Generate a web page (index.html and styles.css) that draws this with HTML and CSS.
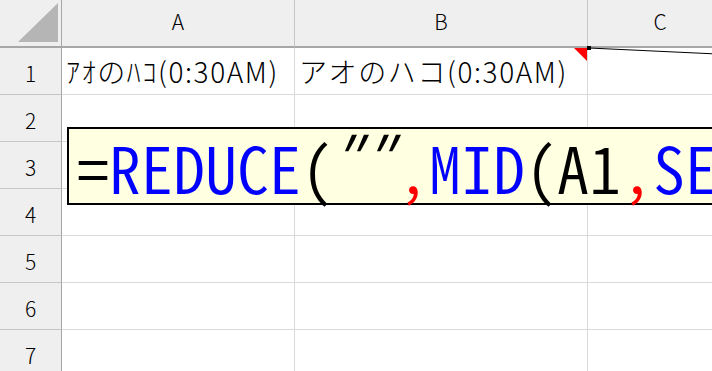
FILE: index.html
```html
<!DOCTYPE html>
<html lang="ja">
<head>
  <meta charset="UTF-8" />
  <meta name="viewport" content="width=device-width, initial-scale=1" />
  <title>Sheet</title>
  <link rel="stylesheet" href="styles.css">
</head>
<body>
  <div class="sheet">
    <div class="grid">
      <div class="corner">
        <svg class="corner-tri" width="40" height="39" viewBox="0 0 40 39"><polygon points="40,0 40,39 0,39" fill="#b5b5b5"/></svg>
      </div>
      <div class="col-head">A</div>
      <div class="col-head">B</div>
      <div class="col-head last">C</div>

      <div class="row-head">1</div>
      <div class="cell">ｱｵのﾊｺ(0:30AM)</div>
      <div class="cell">アオのハコ(0:30AM)</div>
      <div class="cell"></div>

      <div class="row-head">2</div>
      <div class="cell"></div><div class="cell"></div><div class="cell"></div>
      <div class="row-head">3</div>
      <div class="cell"></div><div class="cell"></div><div class="cell"></div>
      <div class="row-head">4</div>
      <div class="cell"></div><div class="cell"></div><div class="cell"></div>
      <div class="row-head">5</div>
      <div class="cell"></div><div class="cell"></div><div class="cell"></div>
      <div class="row-head">6</div>
      <div class="cell"></div><div class="cell"></div><div class="cell"></div>
      <div class="row-head">7</div>
      <div class="cell"></div><div class="cell"></div><div class="cell"></div>
    </div>

    <!-- comment marker on B1 and its callout line -->
    <svg class="comment-mark" width="14" height="14" viewBox="0 0 14 14"><polygon points="0,0 13,0 13,13" fill="#ff0000"/></svg>
    <svg class="comment-line" width="130" height="12" viewBox="0 0 130 12">
      <line x1="2" y1="2" x2="130" y2="8" stroke="#000" stroke-width="1.2"/>
      <rect x="0" y="0" width="4" height="4" fill="#000"/>
    </svg>

    <div class="formula">
      <span class="k">=</span><span class="fn">REDUCE</span><span class="k">(</span><span class="q">″</span><span class="q">″</span><span class="sep">,</span><span class="fn">MID</span><span class="k">(A1</span><span class="sep">,</span><span class="fn">SE</span>
    </div>
  </div>
</body>
</html>
```

FILE: styles.css
```css
body {
  margin: 0;
  background: #ffffff;
  overflow: hidden;
  font-family: "Noto Sans CJK JP", "Noto Sans", sans-serif;
  color: #000;
}
.sheet {
  position: relative;
  width: 712px;
  height: 371px;
  overflow: hidden;
}
.grid {
  display: grid;
  grid-template-columns: 62px 233px 293px 145px;
  grid-template-rows: 48px repeat(7, 47px);
}
.corner {
  background: #efefef;
  border-right: 1px solid #a6a6a6;
  border-bottom: 2px solid #a6a6a6;
  display: flex;
  align-items: flex-end;
  justify-content: flex-end;
  padding: 0 3px 4px 0;
  box-sizing: border-box;
}
.col-head {
  background: #efefef;
  border-right: 1px solid #c6c6c6;
  border-bottom: 2px solid #a6a6a6;
  display: flex;
  align-items: center;
  justify-content: center;
  font-size: 21px;
  font-weight: 300;
  padding-bottom: 5px;
  box-sizing: border-box;
}
.row-head {
  background: #efefef;
  border-right: 1px solid #a6a6a6;
  border-bottom: 1px solid #c6c6c6;
  display: flex;
  align-items: center;
  justify-content: center;
  font-size: 21px;
  font-weight: 300;
  padding-top: 4px;
  box-sizing: border-box;
}
.cell {
  border-right: 1px solid #dadada;
  border-bottom: 1px solid #dadada;
  display: flex;
  align-items: center;
  padding: 0 0 0 4px;
  font-size: 28px;
  font-weight: 300;
  letter-spacing: 1.6px;
  white-space: nowrap;
  box-sizing: border-box;
}
.comment-mark {
  position: absolute;
  left: 574px;
  top: 48px;
}
.comment-line {
  position: absolute;
  left: 587px;
  top: 46px;
}
.formula {
  position: absolute;
  left: 67px;
  top: 127px;
  width: 700px;
  height: 78px;
  box-sizing: border-box;
  border: 2px solid #000;
  background: #ffffe1;
  padding-left: 8px;
  font-size: 64px;
  font-weight: 350;
  line-height: 74px;
  font-feature-settings: "hwid" 1;
  white-space: nowrap;
}
.formula .k { color: #000; }
.formula .fn { color: #0000ff; }
.formula .sep { color: #ff0000; }
.formula .q {
  display: inline-block;
  width: 32px;
  line-height: 0;
  text-align: center;
  transform: skewX(-18deg) translateY(-10px);
}
```
